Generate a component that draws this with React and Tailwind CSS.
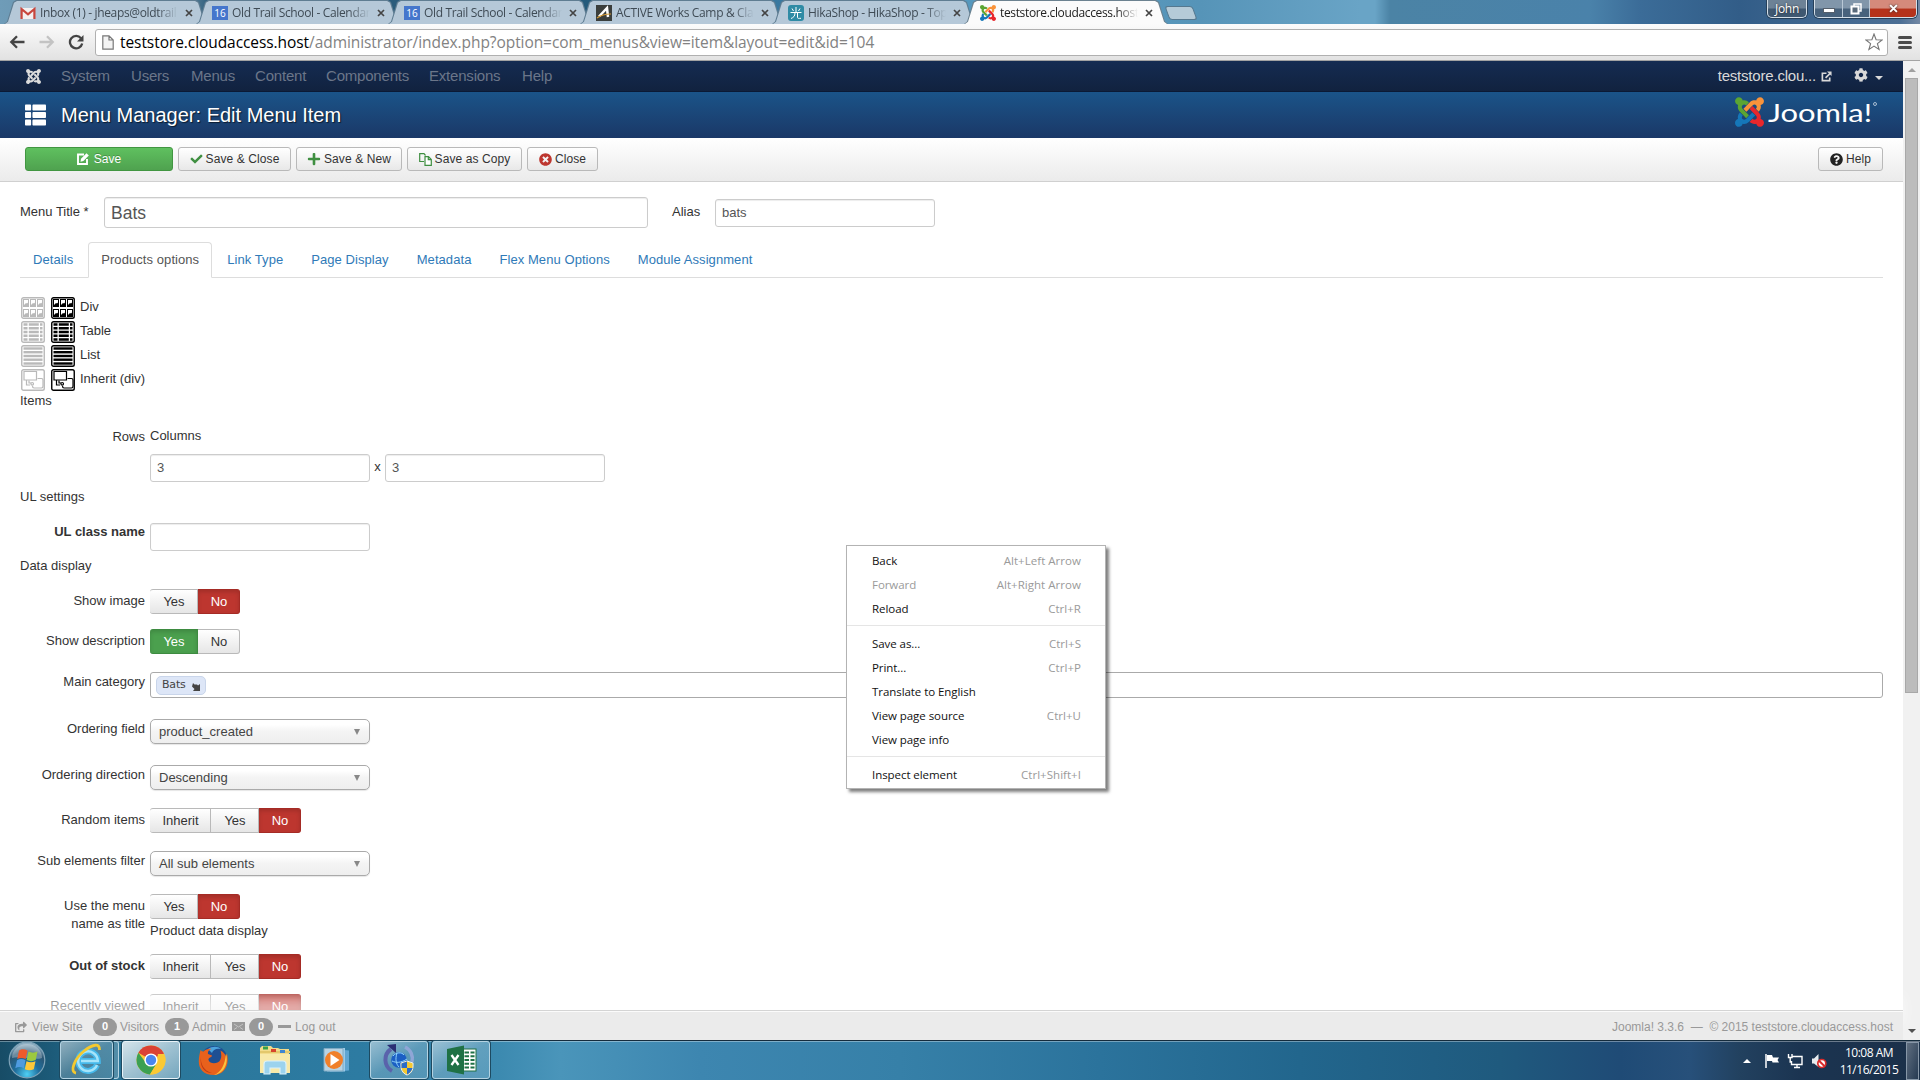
import React from 'react';
import clsx from 'clsx';
import {
  FaJoomla,
  FaPlus,
  FaCheck,
  FaCog,
  FaThList,
  FaTimesCircle,
  FaQuestionCircle,
  FaShareSquare,
} from 'react-icons/fa';

const browserTabs = [
  { title: 'Inbox (1) - jheaps@oldtrail', icon: 'gmail' },
  { title: 'Old Trail School - Calendar', icon: 'calendar' },
  { title: 'Old Trail School - Calendar', icon: 'calendar' },
  { title: 'ACTIVE Works Camp & Cla', icon: 'active' },
  { title: 'HikaShop - HikaShop - Top', icon: 'hika' },
  { title: 'teststore.cloudaccess.host', icon: 'joomla', active: true },
];

const navItems = [
  { label: 'System', width: 'w-[70px]' },
  { label: 'Users', width: 'w-[60px]' },
  { label: 'Menus', width: 'w-[64px]' },
  { label: 'Content', width: 'w-[71px]' },
  { label: 'Components', width: 'w-[103px]' },
  { label: 'Extensions', width: 'w-[93px]' },
  { label: 'Help', width: 'w-[40px]' },
];

const pageTabs = [
  'Details',
  'Products options',
  'Link Type',
  'Page Display',
  'Metadata',
  'Flex Menu Options',
  'Module Assignment',
];

const contextMenu = [
  [
    { label: 'Back', keys: 'Alt+Left Arrow' },
    { label: 'Forward', keys: 'Alt+Right Arrow', disabled: true },
    { label: 'Reload', keys: 'Ctrl+R' },
  ],
  [
    { label: 'Save as...', keys: 'Ctrl+S' },
    { label: 'Print...', keys: 'Ctrl+P' },
    { label: 'Translate to English' },
    { label: 'View page source', keys: 'Ctrl+U' },
    { label: 'View page info' },
  ],
  [{ label: 'Inspect element', keys: 'Ctrl+Shift+I' }],
];

/* ---------- icons ---------- */

const JoomlaMark = ({ className }) => (
  <svg className={className} viewBox="0 30 448 452" preserveAspectRatio="none">
    <path fill="#5ba532" d="M.6 92.1C.6 58.8 27.4 32 60.4 32c30 0 54.5 21.9 59.2 50.2 32.6-7.6 67.1.6 96.5 30l-44.3 44.3c-20.5-20.5-42.6-16.3-55.4-3.5-14.3 14.3-14.3 37.9 0 52.2l99.5 99.5-44 44.3c-87.7-87.2-49.7-49.7-99.8-99.7-26.8-26.5-35-64.8-24.8-98.9C20.4 144.6.6 120.7.6 92.1z" />
    <path fill="#f9933a" d="M130.1 208.5l44.3 44.3c10-10 89.7-89.7 99.7-99.8 14.3-14.3 37.6-14.3 51.9 0 12.8 12.8 17 35-3.5 55.4l44 44.3c31.2-31.2 38.5-67.6 28.9-101.2 29.2-4.1 51.9-29.2 51.9-59.5 0-33.2-26.8-60.1-59.8-60.1-30.3 0-55.4 22.5-59.5 51.6-33.8-9.9-71.7-1.5-98.3 25.1-18.3 19.1-71.1 71.5-99.6 99.9z" />
    <path fill="#e8272c" d="M396.4 360.7c8.2-32.7-.9-68.5-26.3-93.9-11.8-12.2 5 4.7-99.5-99.7l-44.3 44.3 99.7 99.7c14.3 14.3 14.3 37.6 0 51.9-12.8 12.8-35 17-55.4-3.5l-44 44.3c27.6 30.2 68 38.8 102.7 28 5.5 27.4 29.7 48.1 58.9 48.1 33 0 59.8-26.8 59.8-60.1 0-30.2-22.5-55-51.6-59.1z" />
    <path fill="#1577b9" d="M312.1 307.6l-44-44.3c-87 86.4-50.4 50.4-99.7 99.8-14.3 14.3-37.6 14.3-51.9 0-13.1-13.4-16.9-35.3 3.2-55.4l-44-44.3c-30.2 30.2-38 65.2-29.5 98.3-26.7 6-46.2 29.9-46.2 58.2C0 453.2 26.8 480 59.8 480c28.6 0 52.5-19.8 58.6-46.7 32.7 8.2 68.5-.6 94.2-26 32.1-32 12.2-12.4 99.5-99.7z" />
  </svg>
);

const Favicon = ({ name }) => {
  if (name === 'joomla') return <JoomlaMark className="h-4 w-4 shrink-0" />;
  if (name === 'calendar') {
    return (
      <span className="flex h-[14px] w-4 shrink-0 items-center justify-center bg-[#4576cc] text-[10px] leading-none text-white">
        16
      </span>
    );
  }
  if (name === 'gmail') {
    return (
      <svg className="h-4 w-4 shrink-0" viewBox="0 0 16 16">
        <rect x="1" y="3" width="14" height="11" fill="#f3f0f0" />
        <path d="M1.6 14V4l6.4 5.4L14.4 4v10" fill="none" stroke="#c8463d" strokeWidth="2.2" />
      </svg>
    );
  }
  if (name === 'active') {
    return (
      <svg className="h-4 w-4 shrink-0" viewBox="0 0 16 16">
        <rect width="16" height="16" fill="#3a3e3c" />
        <path d="M3 11.500L11 3l1 9" fill="none" stroke="#fff" strokeWidth="2.5" />
        <path d="M1 13c4-3 8-4 14-4" fill="none" stroke="#d49a35" strokeWidth="1.2" />
      </svg>
    );
  }
  return (
    <svg className="h-4 w-4 shrink-0" viewBox="0 0 16 16">
      <rect width="16" height="16" rx="3" fill="#2f8ba5" />
      <path d="M8 2v5M4 3.5l1.5 2.5M12 3.5L10.5 6M2.5 7.5h11M7 8c0 3-1.500 4.500-4 5.5M9.5 8v4.500c0 1 1 1 3.500.8" fill="none" stroke="#fff" />
    </svg>
  );
};

const CloseGlyph = ({ className }) => (
  <svg className={className} viewBox="0 0 8 8">
    <path d="M1 1l6 6M7 1L1 7" stroke="currentColor" strokeWidth="1.7" />
  </svg>
);

const EditIcon = () => (
  <svg className="h-3 w-3" viewBox="0 0 12 12">
    <path d="M7 1.5H1V11h9V6" fill="none" stroke="#fff" strokeWidth="1.9" />
    <path d="M3.5 8.800l.5-3L9.500.200l2.300 2.300L6.400 8z" fill="#fff" />
  </svg>
);

const CopyIcon = () => (
  <svg className="h-[13px] w-[13px]" viewBox="0 0 13 13" fill="none" stroke="#3f8f41" strokeWidth="1.2">
    <path d="M5 8.5H.7V.7H5L6.500 2.500" />
    <path d="M6 3.700h3.500l2.800 2.800v5.800H6zM9.300 3.700v3h3" fill="#fff" />
  </svg>
);

const ExternalIcon = ({ className }) => (
  <svg className={className} viewBox="0 0 12 12" fill="none" stroke="currentColor" strokeWidth="1.8">
    <path d="M6 2.500H1.500v8H9.500V7" />
    <path d="M5 7.500L10 2.500" />
    <path d="M6.500.5h5V5.500z" fill="currentColor" stroke="none" />
  </svg>
);

const LayoutIcon = ({ type, muted }) => {
  const c = muted ? '#b9b9b9' : '#000';
  return (
    <svg className="h-[22px] w-6 shrink-0" viewBox="0 0 24 22">
      <rect x=".75" y=".75" width="22.5" height="20.5" rx="1.8" fill="#fff" stroke={c} strokeWidth="1.4" />
      {type === 'div' &&
        [2, 12].map((y) =>
          [2, 9, 16].map((x) => (
            <g key={`${x}-${y}`}>
              <rect x={x + 0.5} y={y + 0.5} width="5" height="7" fill="#fff" stroke={c} />
              <path d={`M${x + 1} ${y + 7.5}v-1.5l2-2 1 .5 1.500-1.500v4.500z`} fill={c} />
            </g>
          ))
        )}
      {type === 'table' &&
        [3.5, 7.2, 11, 14.7, 18.5].map((y) => (
          <path key={y} d={`M2.5 ${y}h4M7.800 ${y}h10M19 ${y}h2.500`} stroke={c} strokeWidth="2.4" />
        ))}
      {type === 'list' &&
        [3.5, 7.2, 11, 14.7, 18.5].map((y) => (
          <path key={y} d={`M2.5 ${y}h19`} stroke={c} strokeWidth="2.4" />
        ))}
      {type === 'inherit' && (
        <g fill="none" stroke={c} strokeWidth="1.2">
          <path d="M3 2.500h12.500v8.500H3z" />
          <path d="M16.500 9.500h4q1.500 0 1.500 1.500v6q0 2-1.500 2h-7.500q-1.500 0-1.500-2" />
          <path d="M5.500 11v5h3.500M8 11.500v2.500h2" />
          <circle cx="11.200" cy="14.800" r="1.300" />
        </g>
      )}
    </svg>
  );
};

/* ---------- browser window ---------- */

const BrowserTab = ({ tab }) => (
  <div
    className={clsx(
      'relative -mr-3 h-[24px] w-[204px] shrink-0 p-px pb-0 [clip-path:polygon(0_100%,3px_90%,9px_8%,12px_0,192px_0,195px_8%,201px_90%,204px_100%)]',
      tab.active ? 'z-10 bg-[#6c8290]' : 'bg-[#5f7d92]'
    )}
  >
    <div
      className={clsx(
        'flex h-full items-center pl-[15px] [clip-path:polygon(0_100%,3px_90%,9px_8%,12px_0,190px_0,193px_8%,199px_90%,202px_100%)]',
        tab.active ? 'bg-[#fbfbfb] text-[#222]' : 'bg-[#b5c8d8] text-[#3f4b55]'
      )}
    >
      <Favicon name={tab.icon} />
      <span className="ml-1 w-[138px] overflow-hidden text-[12px] leading-6 tracking-[-0.35px] whitespace-nowrap [mask-image:linear-gradient(to_right,#000_85%,transparent)]">
        {tab.title}
      </span>
      <CloseGlyph className="ml-[7px] h-2 w-2 text-[#444]" />
    </div>
  </div>
);

const WindowControls = () => (
  <div className="flex h-[19px]">
    <div className="mr-[7px] flex h-[18px] w-[40px] items-center justify-center rounded-b-[5px] border border-t-0 border-[#d5dfe8] bg-linear-to-b from-[#6d8296] from-45% to-[#3f5871] to-55% text-[12px] tracking-[-0.3px] text-white shadow-[0_0_0_1px_#26405a] [text-shadow:0_0_2px_#222]">
      John
    </div>
    <div className="flex h-[18px] overflow-hidden rounded-b-[5px] border border-t-0 border-[#d5dfe8] shadow-[0_0_0_1px_#26405a]">
      <div className="flex w-[28px] items-center justify-center border-r border-[#b9c8d6] bg-linear-to-b from-[#8196aa] from-45% to-[#48627c] to-55%">
        <span className="mt-1 h-[5px] w-[12px] border border-[#555f6b] bg-white" />
      </div>
      <div className="flex w-[27px] items-center justify-center border-r border-[#b9c8d6] bg-linear-to-b from-[#8196aa] from-45% to-[#48627c] to-55%">
        <svg className="h-[12px] w-[12px]" viewBox="0 0 12 12">
          <rect x="4" y="1" width="7" height="7" fill="none" stroke="#fff" strokeWidth="1.5" />
          <rect x="1.5" y="3.5" width="7" height="7" fill="#5a6a7a" stroke="#fff" strokeWidth="2" />
        </svg>
      </div>
      <div className="flex w-[46px] items-center justify-center bg-linear-to-b from-[#d58a7b] from-45% to-[#b5321b] to-55%">
        <CloseGlyph className="h-[9px] w-[11px] text-white drop-shadow-[0_0_1px_#333]" />
      </div>
    </div>
  </div>
);

const BrowserChrome = () => (
  <div className="shrink-0 font-['Open_Sans','Noto_Sans',sans-serif]">
    <div className="flex h-[24px] justify-between bg-[linear-gradient(90deg,#6f9cb8_0,#5c8299_190px,#2b5c7c_210px,#2b5c7c_400px,#235a7b_600px,#3c7ca4_800px,#5a9dc2_1000px,#5694b8_1200px,#69a4c6_1360px,#69a4c6_1375px,#4b83a5_1390px,#4a82aa_1590px,#3b6c98_1640px,#325d88_1740px,#4c6f95_1900px,#7489a5_1920px)]">
      <div className="flex pl-1">
        {browserTabs.map((tab, i) => (
          <BrowserTab key={i} tab={tab} />
        ))}
        <div className="mt-[6px] ml-[11px] h-[14px] w-[28px] skew-x-[20deg] rounded-[3px] border border-[#55788f] bg-[#b5cbd8]" />
      </div>
      <div className="pr-[3px]">
        <WindowControls />
      </div>
    </div>
    <div className="flex h-[37px] items-center border-b border-[#a3a3a3] bg-linear-to-b from-[#fbfbfb] to-[#e2e2e2] pr-2 pl-[9px]">
      <svg className="h-4 w-4" viewBox="0 0 16 16" fill="none" stroke="#444" strokeWidth="2.3">
        <path d="M15.5 8H2.5M8 2.300L2.300 8 8 13.700" />
      </svg>
      <svg className="ml-[14px] h-4 w-4" viewBox="0 0 16 16" fill="none" stroke="#c3c3c3" strokeWidth="2.3">
        <path d="M.5 8h13M8 2.300L13.700 8 8 13.700" />
      </svg>
      <svg className="ml-[13px] h-4 w-4" viewBox="0 0 16 16">
        <path d="M13 4.200A6.200 6.200 0 1 0 14.200 9.500" fill="none" stroke="#444" strokeWidth="2.3" />
        <path d="M15.500 1v6.500H9z" fill="#444" />
      </svg>
      <div className="ml-[11px] flex h-[27px] flex-1 items-center rounded-[3px] border border-[#b0b0b0] bg-white pr-1 pl-[6px]">
        <svg className="h-[15px] w-3" viewBox="0 0 12 15" fill="#f3f3f3" stroke="#777" strokeWidth="1.2">
          <path d="M.8.800H7l4.200 4.200v9.200H.8zM7 .8V5h4.200" />
        </svg>
        <p className="ml-[6px] flex-1 pt-px text-[15.5px] leading-none tracking-[-0.07px] whitespace-nowrap text-[#828282]">
          <span className="text-black">teststore.cloudaccess.host</span>
          /administrator/index.php?option=com_menus&amp;view=item&amp;layout=edit&amp;id=104
        </p>
        <svg className="h-[18px] w-[18px]" viewBox="0 0 18 18" fill="#fff" stroke="#757575" strokeWidth="1.1">
          <path d="M9 1l2.100 5.700 6 .2-4.700 3.700 1.700 5.900L9 13.100 3.900 16.500l1.700-5.900L.9 6.900l6-.2z" />
        </svg>
      </div>
      <div className="ml-[10px] flex w-[14px] flex-col gap-[2px]">
        <span className="h-[3px] rounded-full bg-[#4c4c4c]" />
        <span className="h-[3px] rounded-full bg-[#4c4c4c]" />
        <span className="h-[3px] rounded-full bg-[#4c4c4c]" />
      </div>
    </div>
  </div>
);

/* ---------- joomla admin ---------- */

const Navbar = () => (
  <nav className="flex h-[31px] shrink-0 items-center border-b border-[#0b1a35] bg-linear-to-b from-[#152c52] to-[#11223f] pr-[20px] pl-[25px] text-[15px] tracking-[-0.2px]">
    <FaJoomla className="mr-[19px] h-[17px] w-[17px] text-[#dcdcdc]" />
    {navItems.map((item) => (
      <a key={item.label} className={clsx('text-[#6b7689]', item.width)}>
        {item.label}
      </a>
    ))}
    <span className="ml-auto text-[#d9d9d9]">teststore.clou...</span>
    <ExternalIcon className="mr-[22px] ml-[5px] h-[11px] w-[11px] text-[#d9d9d9]" />
    <FaCog className="mb-[2px] h-[14px] w-[14px] text-[#d9d9d9]" />
    <span className="mt-1 ml-[7px] border-x-4 border-t-4 border-x-transparent border-t-[#d9d9d9]" />
  </nav>
);

const Header = () => (
  <header className="flex h-[46px] shrink-0 items-center bg-linear-to-b from-[#1a5489] to-[#1a3867] pr-[21px] pl-[25px]">
    <FaThList className="mr-[15px] h-[24px] w-[21px] text-white" preserveAspectRatio="none" />
    <h1 className="text-[20px] leading-none text-white [text-shadow:1px_1px_1px_rgba(0,0,0,0.6)]">
      Menu Manager: Edit Menu Item
    </h1>
    <div className="mb-[6px] ml-auto flex items-center">
      <JoomlaMark className="h-[30px] w-[29px]" />
      <svg className="ml-1 h-[30px] w-[114px]" viewBox="0 0 114 30">
        <text x="0" y="24.5" fill="#fff" fontFamily="Lato, sans-serif" fontSize="25" textLength="104" lengthAdjust="spacingAndGlyphs">
          Joomla!
        </text>
        <circle cx="107" cy="7" r="1.5" fill="none" stroke="#c9d7e6" strokeWidth=".8" />
      </svg>
    </div>
  </header>
);

const ToolButton = ({ icon, children, className }) => (
  <button
    className={clsx(
      'flex h-6 items-center justify-center gap-[3px] rounded-[3px] border border-[#b9b9b9] bg-linear-to-b from-white to-[#e8e8e8] text-[12px] tracking-[0.1px] whitespace-nowrap text-[#333]',
      className
    )}
  >
    {icon}
    {children}
  </button>
);

const Toolbar = () => (
  <div className="flex h-[44px] shrink-0 items-start gap-[5px] border-b border-[#d0d0d0] bg-linear-to-b from-white to-[#ebebeb] pt-[9px] pr-[20px] pl-[25px]">
    <button className="flex h-6 w-[148px] items-center justify-center gap-[5px] rounded-[3px] border border-[#419641] bg-linear-to-b from-[#5fc05f] to-[#4fa24f] text-[12px] text-white [text-shadow:0_-1px_0_rgba(0,0,0,0.25)]">
      <EditIcon />
      Save
    </button>
    <ToolButton className="w-[113px]" icon={<FaCheck className="h-3 w-[13px] text-[#3f8f41]" />}>Save &amp; Close</ToolButton>
    <ToolButton className="w-[106px]" icon={<FaPlus className="h-[14px] w-[14px] text-[#3f8f41]" />}>Save &amp; New</ToolButton>
    <ToolButton className="w-[115px]" icon={<CopyIcon />}>Save as Copy</ToolButton>
    <ToolButton className="w-[71px]" icon={<FaTimesCircle className="h-[13px] w-[13px] text-[#bd362f]" />}>Close</ToolButton>
    <ToolButton className="ml-auto w-[65px]" icon={<FaQuestionCircle className="h-[13px] w-[13px] text-[#222]" />}>Help</ToolButton>
  </div>
);

const TextBox = ({ className, children }) => (
  <div
    className={clsx(
      'flex h-7 w-[220px] items-center rounded-[3px] border border-[#ccc] bg-white px-[6px] text-[#555] shadow-[inset_0_1px_1px_rgba(0,0,0,0.075)]',
      className
    )}
  >
    {children}
  </div>
);

const SelectBox = ({ children }) => (
  <div className="flex h-[25px] w-[220px] items-center justify-between rounded-[5px] border border-[#aaa] bg-linear-to-b from-white from-20% via-[#f4f4f4] via-50% to-[#eee] pr-[9px] pl-2 text-[#444] shadow-[0_1px_1px_rgba(0,0,0,0.1)]">
    {children}
    <span className="border-x-[3.5px] border-t-[6px] border-x-transparent border-t-[#888]" />
  </div>
);

const optionWidths = { Inherit: 'w-[61px]', Yes: 'w-12', No: 'w-[42px]' };

const Toggle = ({ options, value }) => (
  <div className="flex h-[25px]">
    {options.map((opt, i) => {
      const selected = opt === value;
      return (
        <button
          key={opt}
          className={clsx(
            'h-full border border-l-0 pl-px text-center leading-[22px]',
            optionWidths[opt],
            i === 0 && 'rounded-l-[3px] border-l',
            i === options.length - 1 && 'rounded-r-[3px]',
            !selected && 'border-[#b9b9b9] bg-linear-to-b from-white to-[#e6e6e6] text-[#333]',
            selected && opt === 'No' && 'border-[#a52b25] bg-[#bd362f] text-white shadow-[inset_0_2px_4px_rgba(0,0,0,0.15)]',
            selected && opt === 'Yes' && 'border-[#3d8b40] bg-[#4ba04e] text-white shadow-[inset_0_2px_4px_rgba(0,0,0,0.15)]'
          )}
        >
          {opt}
        </button>
      );
    })}
  </div>
);

const FormRow = ({ label, className, labelClass = 'pt-[3px]', children }) => (
  <div className={clsx('flex shrink-0', className)}>
    <label className={clsx('mr-[5px] w-[125px] shrink-0 text-right leading-[18px]', labelClass)}>{label}</label>
    {children}
  </div>
);

const layouts = [
  { type: 'div', label: 'Div' },
  { type: 'table', label: 'Table' },
  { type: 'list', label: 'List' },
  { type: 'inherit', label: 'Inherit (div)' },
];

const YES_NO = ['Yes', 'No'];
const INHERIT_YES_NO = ['Inherit', 'Yes', 'No'];

const MenuItemForm = () => (
  <main className="flex h-[828px] shrink-0 flex-col overflow-hidden bg-white px-[20px] pt-[15px] text-[13px] leading-[18px] text-[#333]">
    <div className="flex h-[45px] shrink-0 items-start">
      <label className="w-[84px] pt-[6px]">Menu Title *</label>
      <TextBox className="h-[31px] w-[544px] text-[17.5px]">Bats</TextBox>
      <label className="ml-[24px] w-[43px] pt-[6px]">Alias</label>
      <TextBox className="mt-[2px]">bats</TextBox>
    </div>

    <ul className="flex h-[36px] shrink-0 border-b border-[#ddd] tracking-[0.07px]">
      {pageTabs.map((tab, i) => (
        <li
          key={tab}
          className={clsx(
            'mr-[2px] h-[36px] rounded-t border px-3 pt-[8px]',
            i === 1 ? 'border-[#ddd] border-b-white bg-white text-[#555]' : 'border-transparent text-[#2f7ab8]'
          )}
        >
          {tab}
        </li>
      ))}
    </ul>

    <div className="mt-[19px] ml-px flex shrink-0 flex-col gap-[2px]">
      {layouts.map((item) => (
        <div key={item.type} className="flex h-[22px] items-start">
          <LayoutIcon type={item.type} muted />
          <span className="w-[6px]" />
          <LayoutIcon type={item.type} />
          <span className="mt-px ml-[5px]">{item.label}</span>
        </div>
      ))}
    </div>

    <p className="mt-px shrink-0">Items</p>
    <FormRow label="Rows" className="mt-[17px] h-[27px]" labelClass="pt-px">
      <span>Columns</span>
    </FormRow>
    <div className="ml-[130px] flex h-[34px] shrink-0 items-start">
      <TextBox>3</TextBox>
      <span className="w-[15px] pt-1 text-center">x</span>
      <TextBox>3</TextBox>
    </div>
    <p className="h-[35px] shrink-0">UL settings</p>
    <FormRow label={<b>UL class name</b>} className="h-[34px]" labelClass="pt-0">
      <TextBox />
    </FormRow>
    <p className="h-[32px] shrink-0">Data display</p>
    <FormRow label="Show image" className="h-[40px]">
      <Toggle options={YES_NO} value="No" />
    </FormRow>
    <FormRow label="Show description" className="h-[43px]">
      <Toggle options={YES_NO} value="Yes" />
    </FormRow>
    <FormRow label="Main category" className="h-[47px]" labelClass="pt-px">
      <div className="flex h-[26px] flex-1 items-center rounded-[3px] border border-[#aaa] bg-white pl-[5px]">
        <span className="flex h-[19px] w-[50px] items-center gap-[6px] rounded-[5px] border border-[#c9d5ea] bg-[#dde6f7] pl-[5px] font-['DejaVu_Sans','Open_Sans',sans-serif] text-[11px] tracking-[-0.2px] text-[#444]">
          Bats
          <svg className="mt-[3px] h-2 w-2" viewBox="0 0 8 8">
            <path d="M1 0l1.500 1.500H5l1 1L8 1v7H1l1.500-2L0 3.500z" fill="#444" />
          </svg>
        </span>
      </div>
    </FormRow>
    <FormRow label="Ordering field" className="h-[46px]" labelClass="pt-px">
      <SelectBox>product_created</SelectBox>
    </FormRow>
    <FormRow label="Ordering direction" className="h-[43px]" labelClass="pt-px">
      <SelectBox>Descending</SelectBox>
    </FormRow>
    <FormRow label="Random items" className="h-[43px]">
      <Toggle options={INHERIT_YES_NO} value="No" />
    </FormRow>
    <FormRow label="Sub elements filter" className="h-[43px]" labelClass="pt-px">
      <SelectBox>All sub elements</SelectBox>
    </FormRow>
    <FormRow label="Use the menu name as title" className="h-[60px]" labelClass="pt-[3px] pl-[40px]">
      <div>
        <Toggle options={YES_NO} value="No" />
        <p className="mt-[3px]">Product data display</p>
      </div>
    </FormRow>
    <FormRow label={<b>Out of stock</b>} className="h-[40px]">
      <Toggle options={INHERIT_YES_NO} value="No" />
    </FormRow>
    <FormRow label="Recently viewed" className="h-[40px]">
      <Toggle options={INHERIT_YES_NO} value="No" />
    </FormRow>
  </main>
);

const Badge = ({ children }) => (
  <span className="flex h-[18px] w-6 items-center justify-center rounded-full bg-[#999] text-[11px] font-bold text-white">
    {children}
  </span>
);

const StatusBar = () => (
  <footer className="relative flex h-[30px] shrink-0 items-center border-t border-[#d4d4d4] bg-[#ebebeb] pt-[2px] pr-[10px] pl-[15px] text-[12px] text-[#999] shadow-[0_1px_0_rgba(255,255,255,0.8)_inset,0_-15px_15px_rgba(255,255,255,0.6)]">
    <FaShareSquare className="mr-[5px] h-3 w-3" />
    <span className="w-[61px] tracking-[0.1px]">View Site</span>
    <Badge>0</Badge>
    <span className="ml-[3px] w-[45px]">Visitors</span>
    <Badge>1</Badge>
    <span className="ml-[3px] w-[40px]">Admin</span>
    <svg className="mr-[4px] h-[9px] w-[13px]" viewBox="0 0 13 9">
      <rect width="13" height="9" fill="#999" />
      <path d="M2 2l4.500 3L11 2M2 7.500l3-2M11 7.500l-3-2" fill="none" stroke="#c4c4c4" />
    </svg>
    <Badge>0</Badge>
    <span className="mr-1 ml-[5px] h-[3px] w-[13px] bg-[#999]" />
    <span className="tracking-[0.1px]">Log out</span>
    <span className="ml-auto">Joomla! 3.3.6 &nbsp;&mdash;&nbsp; &copy; 2015 teststore.cloudaccess.host</span>
  </footer>
);

const Scrollbar = () => (
  <div className="flex w-[17px] shrink-0 flex-col items-center justify-between bg-[#f1f1f1]">
    <div className="flex flex-col items-center">
      <span className="mt-[7px] mb-[6px] border-x-[4px] border-b-[4px] border-x-transparent border-b-[#a0a0a0]" />
      <div className="h-[615px] w-[13px] border border-[#a8a8a8] bg-[#bcbcbc]" />
    </div>
    <span className="mb-[7px] border-x-[4px] border-t-[4px] border-x-transparent border-t-[#505050]" />
  </div>
);

const ContextMenu = () => (
  <div className="absolute top-[545px] left-[846px] z-20 h-[244px] w-[260px] border border-[#b3b3b3] bg-white pt-[3px] font-['Open_Sans','Noto_Sans',sans-serif] text-[11.5px] tracking-[-0.06px] shadow-[3px_3px_3px_rgba(0,0,0,0.5)]">
    {contextMenu.map((group, g) => (
      <div key={g} className={clsx(g > 0 && 'mt-[4px] border-t border-[#e5e5e5] pt-[6px]')}>
        {group.map((item) => (
          <div
            key={item.label}
            className={clsx('flex h-6 items-center justify-between pr-[24px] pl-[25px]', item.disabled ? 'text-[#9a9a9a]' : 'text-[#111]')}
          >
            <span>{item.label}</span>
            <span className="tracking-[0.04px] text-[#9a9a9a]">{item.keys}</span>
          </div>
        ))}
      </div>
    ))}
  </div>
);

/* ---------- taskbar ---------- */

const StartOrb = () => (
  <svg className="h-[38px] w-[38px]" viewBox="0 0 38 38">
    <defs>
      <radialGradient id="orb" cx="50%" cy="90%" r="85%">
        <stop offset="0" stopColor="#4fd0f4" />
        <stop offset=".4" stopColor="#1f6f9e" />
        <stop offset=".75" stopColor="#2b5673" />
        <stop offset="1" stopColor="#8fb0c4" />
      </radialGradient>
    </defs>
    <circle cx="19" cy="19" r="17.8" fill="url(#orb)" stroke="#7fa3b8" strokeWidth="1.2" />
    <path d="M4 17a15 14 0 0 1 30 0c-8 3-22-3-30 0z" fill="#fff" opacity=".3" />
    <path d="M11 9.500c3-2 5.500-1.500 8.500 0l-1.800 8.500c-3-1.500-5.500-1.500-8.500 0z" fill="#ee5a2b" />
    <path d="M20.500 10.500c3 1.500 6 1.500 9 0L27.700 19c-3 1.500-6 1.500-9 0z" fill="#9cc93f" />
    <path d="M9 19.200c3-1.500 5.500-1.500 8.500 0l-1.700 8c-3-1.500-5.500-1.500-8.500 0z" fill="#4f9be0" />
    <path d="M18.500 20.200c3 1.500 6 1.500 9 0l-1.700 8c-3 1.500-6 1.500-9 0z" fill="#fdc83a" />
  </svg>
);

const IeIcon = () => (
  <svg className="h-[34px] w-[34px]" viewBox="0 0 34 34">
    <path d="M27 22a9.800 9.800 0 1 1 .8-4H11" fill="none" stroke="#45b8ea" strokeWidth="6" />
    <path d="M27 22a9.800 9.800 0 1 1 .8-4H11" fill="none" stroke="#a6e4fa" strokeWidth="2.500" />
    <path d="M6 30C-1 29 5 15 14 8S30 0 29.500 7" fill="none" stroke="#f4c92f" strokeWidth="2.8" />
  </svg>
);

const ChromeIcon = () => (
  <svg className="h-[30px] w-[30px]" viewBox="0 0 30 30">
    <circle cx="15" cy="15" r="14.5" fill="#fbc934" />
    <path d="M15 15L2.400 7.800A14.500 14.500 0 0 1 27.600 8z" fill="#da4234" />
    <path d="M2.400 7.800A14.500 14.500 0 0 0 14 29.500L21 18l-11 0z" fill="#3ba052" />
    <path d="M14 29.500L21 18l1-10h5.600A14.500 14.500 0 0 1 14 29.500z" fill="#fbc934" />
    <path d="M15 8.500h12.700" stroke="#da4234" />
    <circle cx="15" cy="15" r="6.6" fill="#fff" />
    <circle cx="15" cy="15" r="5.2" fill="#4a86ee" />
  </svg>
);

const FirefoxIcon = () => (
  <svg className="h-[31px] w-[31px]" viewBox="0 0 31 31">
    <circle cx="16" cy="14.5" r="13.5" fill="#1e4f93" />
    <path d="M10 4c4-3 10-3 13 0-5-1-8 1-9 4z" fill="#4ba3dd" />
    <path d="M2.500 5c1 1 2 1.500 3 1.500 2-2 5-3 8-2.500-3 1-4 3-3.500 5l4 1.500c0 2-4 2-3.500 4.500 1 3.500 6 4 9 2.500 4-2 4.500-7 3-12 3 1.500 4.500 3.500 5.500 6l1-3c3 12-3 21.500-13 21.500C5 30 .5 23 .8 16c0-4 1-8 1.700-11z" fill="#e8611c" />
    <path d="M28 8.500c3 11-3 20.500-12 21.500 7-3 11-10 12-21.500z" fill="#fbc23c" />
    <path d="M3 11c-1 8 3 15 11 17-7 0-13-6-11-17z" fill="#c13a14" />
  </svg>
);

const ExplorerIcon = () => (
  <svg className="h-[30px] w-[34px]" viewBox="0 0 34 30">
    <path d="M2 3l2-2h9l2 2h5l2 1h9v24H2z" fill="#f2dc8c" />
    <path d="M2 9h30v19H2z" fill="#f8e9a9" />
    <path d="M2 6h30v2H2z" fill="#e3c86c" />
    <rect x="5" y="1.5" width="5" height="3" fill="#38a24a" />
    <rect x="13" y="4" width="5" height="3" fill="#d8432c" />
    <rect x="22" y="5" width="5" height="3" fill="#3f86d2" />
    <path d="M6 29V19q0-3 3-3h16q3 0 3 3v10h-6v-6H12v6z" fill="#9cd3ee" stroke="#d9f1fb" strokeWidth="1.2" />
  </svg>
);

const MediaIcon = () => (
  <svg className="h-[26px] w-[28px]" viewBox="0 0 28 26">
    <path d="M7 1.500l19 2v20l-19 1.500z" fill="#5fa6d2" />
    <path d="M4 1h18v23.500H4z" fill="#9ccbe8" />
    <path d="M1 1.500h19V24H1z" fill="#b7d3e4" stroke="#7faac4" />
    <circle cx="11" cy="13" r="9" fill="#f0802a" />
    <path d="M7.500 7l9 6-9 6z" fill="#fff" />
  </svg>
);

const SyncIcon = () => (
  <svg className="h-[34px] w-[34px]" viewBox="0 0 34 34">
    <path d="M10 28A13 13 0 0 1 9 6" fill="none" stroke="#5a63ab" strokeWidth="4" />
    <path d="M5 2l9-1v9z" fill="#2b2f74" />
    <path d="M23 4a13 13 0 0 1 7 15" fill="none" stroke="#8fa6d6" strokeWidth="3.500" />
    <circle cx="17" cy="17" r="7.800" fill="#1b5fc4" />
    <path d="M11 13c3-4 9-4 11-1M10 18c4 2 9 2 15-2M15 10c-2 6-1 11 2 14" fill="none" stroke="#8fd2fb" />
    <path d="M25 18l6 2c.5 6-1 10-6 12-5-2-6.500-6-6-12z" fill="#f5c933" stroke="#e6edf5" />
    <path d="M25 18.500l-5.500 2v4.500H25zM25 25h5.500c-1 3-2.500 5-5.500 6.500z" fill="#2b6cc9" />
  </svg>
);

const ExcelIcon = () => (
  <svg className="h-[30px] w-[31px]" viewBox="0 0 31 30">
    <rect x="15" y="4" width="15" height="22" fill="#fff" stroke="#1f7145" />
    {[7.5, 11.2, 15, 18.8, 22.5].map((y) => (
      <path key={y} d={`M18.500 ${y}h4.500M24.500 ${y}h4`} stroke="#1f7145" strokeWidth="2" />
    ))}
    <path d="M1 4L18 .5v29L1 26z" fill="#1f7145" />
    <path d="M5.500 10l7 10M12.500 10l-7 10" stroke="#fff" strokeWidth="2.3" />
  </svg>
);

const TaskSlot = ({ open, focused, className, children }) => (
  <div
    className={clsx(
      'flex h-[38px] items-center justify-center rounded-[3px] border',
      open && !focused && 'border-[#b4d3e2] bg-linear-to-br from-white/50 via-white/20 to-white/15 shadow-[0_0_0_1px_#1d4a61]',
      focused && 'border-[#e9f3f8] bg-linear-to-br from-white/80 via-white/55 to-white/35 shadow-[0_0_0_1px_#1d4a61]',
      !open && 'border-transparent',
      className
    )}
  >
    {children}
  </div>
);

const Taskbar = () => (
  <div className="flex h-10 shrink-0 items-start border-t border-[#142b3c] bg-[linear-gradient(90deg,#174c66_0,#1c5a78_50px,#2a7699_130px,#2d7ba2_360px,#3c8ab0_500px,#4a95ba_560px,#3d86b0_700px,#3680a8_900px,#2b739c_1100px,#22668d_1300px,#1f5a7e_1500px,#1f4b76_1620px,#27507a_1690px,#22415f_1740px,#1b3451_1800px,#1b3049_1920px)] shadow-[inset_0_1px_0_rgba(255,255,255,0.35)]">
    <div className="ml-2 w-[52px]">
      <StartOrb />
    </div>
    <TaskSlot open className="w-[53px]"><IeIcon /></TaskSlot>
    <div className="mr-[3px] ml-px h-[38px] w-[5px] rounded-r-[3px] border border-l-0 border-[#b4d3e2] bg-white/20" />
    <TaskSlot open focused className="w-[58px]"><ChromeIcon /></TaskSlot>
    <TaskSlot className="ml-1 w-[58px]"><FirefoxIcon /></TaskSlot>
    <TaskSlot className="ml-1 w-[58px]"><ExplorerIcon /></TaskSlot>
    <TaskSlot className="ml-1 w-[58px]"><MediaIcon /></TaskSlot>
    <TaskSlot open className="ml-[4px] w-[58px]"><SyncIcon /></TaskSlot>
    <TaskSlot open className="ml-[4px] w-[58px]"><ExcelIcon /></TaskSlot>

    <div className="ml-auto flex h-full items-center font-['Open_Sans','Noto_Sans',sans-serif] text-white">
      <span className="mr-[13px] border-x-4 border-b-4 border-x-transparent border-b-white" />
      <svg className="mr-[7px] h-4 w-4" viewBox="0 0 16 16">
        <path d="M2 1v14" stroke="#fff" strokeWidth="1.5" />
        <path d="M3 2h5l1 2.500h6L13.500 7l1.500 2.500H8.500L8 8H3z" fill="#fff" />
      </svg>
      <svg className="mr-[8px] h-4 w-4" viewBox="0 0 16 16" fill="none" stroke="#fff" strokeWidth="1.4">
        <path d="M5.500 3.500H15v8H4.500V8M7 14.500h6M10 11.500v3M1.500 1v3.500h3.500V1M3.200 4.500V9h1.300" />
      </svg>
      <svg className="mr-[11px] h-4 w-[16px]" viewBox="0 0 16 16">
        <path d="M1 5.500h2L7.500 1v13L3 10.500H1z" fill="#e8ecef" />
        <circle cx="10.8" cy="10.5" r="4" fill="#fff" stroke="#d92b2b" strokeWidth="1.7" />
        <path d="M8 7.700l5.600 5.600" stroke="#d92b2b" strokeWidth="2" />
      </svg>
      <div className="w-[62px] text-center text-[12px] leading-[17px] tracking-[-0.5px]">
        <p>10:08 AM</p>
        <p>11/16/2015</p>
      </div>
      <div className="mr-px ml-[6px] h-[38px] w-[13px] border border-[#8797a8] bg-linear-to-br from-white/30 to-white/5" />
    </div>
  </div>
);

export default function App() {
  return (
    <div className="relative flex h-[1080px] w-[1920px] flex-col overflow-hidden bg-white font-['Liberation_Sans',Arial,sans-serif]">
      <BrowserChrome />
      <div className="flex h-[979px] shrink-0">
        <div className="flex w-[1903px] flex-col">
          <Navbar />
          <Header />
          <Toolbar />
          <MenuItemForm />
          <StatusBar />
        </div>
        <Scrollbar />
      </div>
      <ContextMenu />
      <Taskbar />
    </div>
  );
}
